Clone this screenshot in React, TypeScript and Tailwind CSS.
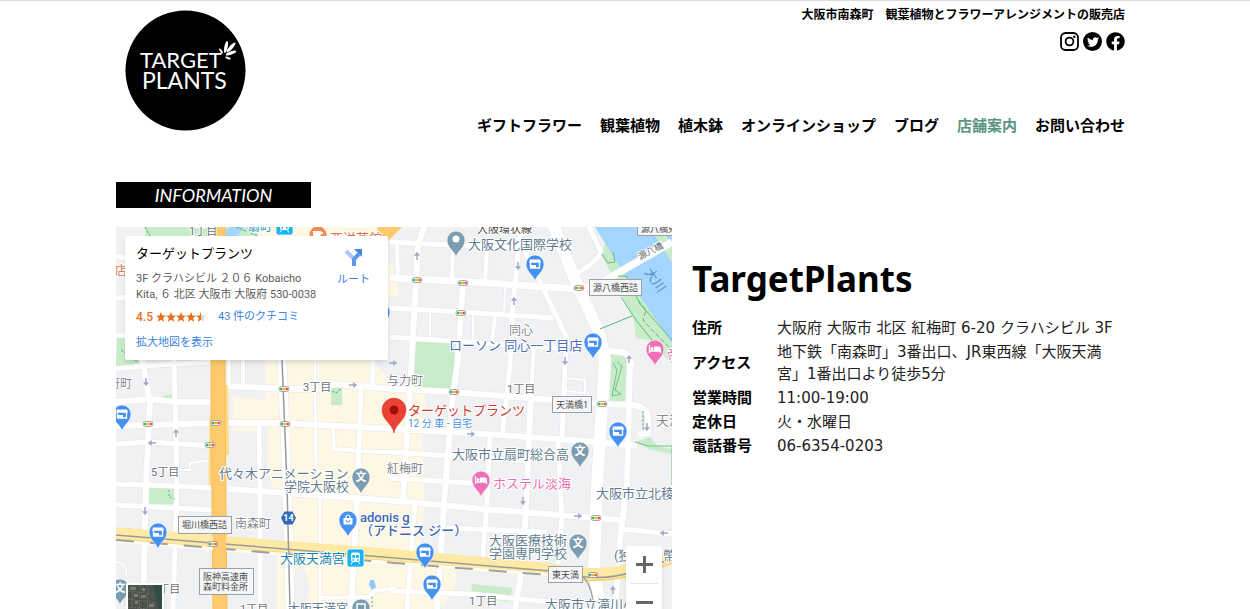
import type { ReactNode } from "react";
import { FaFacebook, FaTwitter } from "react-icons/fa";

type NavItem = { label: string; href: string; active?: boolean };

const NAV_ITEMS: NavItem[] = [
  { label: "ギフトフラワー", href: "#gift" },
  { label: "観葉植物", href: "#plants" },
  { label: "植木鉢", href: "#pots" },
  { label: "オンラインショップ", href: "#shop" },
  { label: "ブログ", href: "#blog" },
  { label: "店舗案内", href: "#information", active: true },
  { label: "お問い合わせ", href: "#contact" },
];

const SHOP_INFO = [
  { term: "住所", detail: "大阪府 大阪市 北区 紅梅町 6-20 クラハシビル 3F" },
  {
    term: "アクセス",
    detail: "地下鉄「南森町」3番出口、JR東西線「大阪天満宮」1番出口より徒歩5分",
  },
  { term: "営業時間", detail: "11:00-19:00" },
  { term: "定休日", detail: "火・水曜日" },
  { term: "電話番号", detail: "06-6354-0203" },
];

// Streets as [path, width]
const STREETS: [string, number][] = [
  ["M116 257H126M116 298L126 297M116 335H126", 5],
  ["M116 369L142 366L175 364L212 362", 5],
  ["M116 402L150 399L175 402L212 402", 6],
  ["M116 426L212 423L282 423L395 429L500 435L597 442L637 446", 6],
  ["M116 444L150 442L212 446", 5],
  ["M116 484L175 486L212 488", 5],
  ["M116 505L175 508L212 510", 5],
  ["M228 386L288 389L322 389L334 384L395 389L453 392L603 404L634 405Q648 408 648 418V433L638 434", 6],
  ["M228 489L315 495L395 501L483 509L597 518L620 520", 6],
  ["M390 452L525 461", 5],
  ["M390 478L484 484", 5],
  ["M447 528L547 532M620 529L672 534", 5],
  ["M320 598L368 597L374 591L395 588", 4],
  ["M390 591L470 594L560 603", 5],
  ["M390 242L450 245L523 249", 5],
  ["M390 308L463 312L553 318", 5],
  ["M390 337L453 341L510 345L567 349", 5],
  ["M597 350L622 352Q631 354 631 366", 6],
  ["M142 358L150 403L146 484L143 609", 6],
  ["M174 358L177 484L173 609", 5],
  ["M243 358V386M229 358V386", 4],
  ["M259 424L260 484V609", 5],
  ["M282 358L287 484L290 609", 9],
  ["M315 358V395L316 467", 3],
  ["M373 358V386M361 388L358 472", 5],
  ["M333 427L334 449L360 451L407 453", 4],
  ["M320 498V609", 3],
  ["M357 498L351 609", 6],
  ["M425 225L418 245L413 335L410 390L403 500", 6],
  ["M415 504L407 609", 5],
  ["M463 282L458 360L452 403L445 490L437 609", 6],
  ["M453 245L452 282M487 248L485 282M397 244L398 279", 4],
  ["M505 288L504 316M430 311V339M473 314V341", 2],
  ["M495 316L492 341M534 346L531 395", 4],
  ["M521 225L512 315L510 365L502 437", 5],
  ["M490 437L487 500L483 557", 5],
  ["M523 248L540 282L567 338L565 365L562 439", 5],
  ["M531 395L527 485L523 564L515 609", 6],
  ["M558 439L560 484L562 517L558 564", 5],
  ["M588 225L600 250Q603 257 578 273", 5],
  ["M630 360L627 485L620 540L615 609", 6],
  ["M553 225L577 284L600 335L605 360L597 485L594 570L601 609", 12],
  ["M457 281L390 278M457 281L577 289L597 285L672 242", 7],
  ["M212 460L190 463V470H180M116 562Q128 564 126 575", 2],
  ["M566 378L585 380V393L566 391V378", 2],
];

type LabelStyle = "area" | "school" | "shop" | "plain" | "sign";

const LABEL_COLORS: Record<LabelStyle, string> = {
  area: "#84898f",
  school: "#5f7d8e",
  shop: "#4a6fb3",
  plain: "#6c7176",
  sign: "#4d4d4d",
};

// [text, x, baseline, size, style]
const LABELS: [string, number, number, number, LabelStyle][] = [
  ["大阪環状線", 477, 233, 11, "sign"],
  ["大阪文化国際学校", 468, 249, 13, "school"],
  ["ローソン 同心一丁目店", 449, 350, 13, "shop"],
  ["同心", 509, 335, 12, "area"],
  ["与力町", 387, 385, 12, "area"],
  ["1丁目", 507, 393, 11, "plain"],
  ["天満", 656, 425, 13, "area"],
  ["大阪市立扇町総合高", 452, 459, 13, "school"],
  ["紅梅町", 387, 473, 12, "area"],
  ["大阪市立北稜", 596, 498, 13, "school"],
  ["大阪医療技術", 489, 545, 13, "school"],
  ["学園専門学校", 489, 558, 13, "school"],
  ["(独", 614, 560, 13, "school"],
  ["幣", 663, 560, 13, "school"],
  ["大阪市立滝川小", 545, 609, 13, "school"],
  ["1丁目", 469, 605, 11, "plain"],
  ["南森町", 235, 528, 12, "area"],
  ["1丁目", 152, 593, 11, "plain"],
  ["1丁目", 240, 613, 11, "plain"],
  ["大阪天満宮", 288, 613, 12, "school"],
  ["代々木アニメーション", 219, 478, 13, "school"],
  ["学院大阪校", 284, 491, 13, "school"],
  ["5丁目", 151, 476, 11, "plain"],
  ["3丁目", 303, 391, 11, "plain"],
  ["府町", 108, 388, 12, "area"],
  ["1丁目", 189, 235, 11, "plain"],
];

// [lines, x, y, width, height]
const SIGNS: [string[], number, number, number, number][] = [
  [["源八橋西詰"], 589, 279, 53, 17],
  [["源八橋東詰"], 637, 220, 53, 16],
  [["天満橋1"], 552, 396, 40, 17],
  [["東天満"], 548, 566, 35, 17],
  [["堀川橋西詰"], 178, 516, 54, 18],
  [["阪神高速南", "森町料金所"], 199, 568, 55, 27],
];

const TRAFFIC_LIGHTS: [number, number][] = [
  [417, 280], [463, 283], [461, 313], [579, 288], [454, 392], [602, 404], [284, 389],
  [285, 424], [216, 423], [210, 445], [148, 424], [213, 544], [596, 518], [593, 575],
];

// [x, y, degrees clockwise from up]
const ONE_WAYS: [number, number, number][] = [
  [417, 256, 0], [518, 266, 180], [514, 301, 0], [565, 361, 180], [353, 385, 90],
  [471, 434, 90], [647, 427, 180], [146, 382, 180], [176, 433, 0], [152, 443, 270],
  [145, 511, 180], [523, 501, 180], [578, 516, 90], [664, 533, 270], [613, 590, 0],
  [629, 359, 0], [393, 363, 90],
];

const SHOP_PINS: [number, number][] = [
  [535, 264], [593, 342], [618, 431], [122, 414], [158, 532], [425, 552], [432, 584], [381, 312],
];

const SCHOOL_PINS: [number, number][] = [[361, 477], [580, 451], [578, 543], [120, 588]];

const HOTEL_PINS: [number, number][] = [[655, 349], [481, 480]];

function Pin({ x, y, color, children }: { x: number; y: number; color: string; children?: ReactNode }) {
  return (
    <g transform={`translate(${x} ${y})`}>
      <path
        d="M0 17C-1.5 11-9 8-9 0A9 9 0 1 1 9 0C9 8 1.500 11 0 17Z"
        fill={color}
        stroke="#fff"
        strokeWidth="0.6"
      />
      {children}
    </g>
  );
}

function StationIcon({ x, y }: { x: number; y: number }) {
  return (
    <g transform={`translate(${x} ${y})`}>
      <rect width="17" height="18" rx="2.500" fill="#17b4f4" stroke="#fff" strokeWidth="0.8" />
      <rect x="4" y="3.500" width="9" height="9.500" rx="2" fill="#fff" />
      <path d="M5.300 6H8V9H5.300ZM9 6H11.700V9H9Z" fill="#17b4f4" />
      <circle cx="6.200" cy="11" r="0.900" fill="#17b4f4" />
      <circle cx="10.800" cy="11" r="0.900" fill="#17b4f4" />
      <path d="M5.500 13L4 15.500M11.500 13L13 15.500" stroke="#fff" />
    </g>
  );
}

function MapDrawing() {
  return (
    <svg
      role="img"
      aria-label="ターゲットプランツ周辺の地図"
      viewBox="116 227 556 382"
      preserveAspectRatio="xMinYMin slice"
      className="absolute inset-0 size-full font-['Roboto','Noto_Sans_CJK_JP',sans-serif]"
    >
      <rect x="116" y="227" width="700" height="600" fill="#eff1f3" />

      {/* commercial blocks */}
      <g fill="#fef7e3">
        <path d="M265 360H373L395 389H425V410H423V452L425 503L412 609H268L265 545L279 500L262 465L263 431H233V396L265 400Z" />
        <path d="M388 263L392 264L400 295L388 296Z" />
        <path d="M407 560L457 565L455 590L440 609H405Z" />
        <path d="M255 227H388V240H255Z" />
      </g>
      <path d="M262 425H268V462L272 495L284 499V542H262ZM260 545H277V609H260ZM296 565L306 572L310 590L305 609H292Z" fill="#eff1f3" />

      {/* parks */}
      <g fill="#c8ecc9">
        <path d="M414 342H455L453 390L413 386Z" />
        <path d="M611 354L627 357L625 402H610Z" />
        <path d="M472 584L512 588L510 602L471 597Z" />
        <path d="M331 388H342V405H331Z" />
        <path d="M148 487L176 488V504H148Z" />
        <path d="M145 227H258V238H145ZM117 337H128L141 365L116 367Z" />
        <path d="M162 396L172 394V400H162Z" />
        <path d="M597 227L606 240L602 255L634 320L636 338L650 340L672 364V340L620 262L600 227Z" />
        <path d="M635 442L650 437L658 446L672 449V454L652 450Z" />
      </g>
      <path d="M595 227L622 270L672 343V227Z" fill="#a3d5ff" />
      <path d="M219 237L230 227H244L237 237Z" fill="#a3d5ff" />
      <path d="M650 227H662L672 246V263Z" fill="#c8ecc9" />

      <g fill="none" stroke="#e3e6ea" strokeLinejoin="round">
        {STREETS.map(([d, width]) => (
          <path key={d} d={d} strokeWidth={width + 1} />
        ))}
      </g>
      <g fill="none" stroke="#fff" strokeLinejoin="round">
        {STREETS.map(([d, width]) => (
          <path key={d} d={d} strokeWidth={width} />
        ))}
      </g>

      <g fill="none" stroke="#55b872">
        <path d="M600 329L632 316" />
        <path d="M621 297L636 320L652 340M602 254L608 263L615 262L613 252M618 276L626 276L640 304L672 340" strokeWidth="0.900" />
        <path d="M638 300L646 310L643 320L652 330L672 350" strokeDasharray="5 2" strokeWidth="0.900" />
        <path d="M617 362L622 366L615 390L621 394L612 396L617 370L613 363M635 442L648 446H672V485" strokeWidth="0.800" />
        <path d="M145 227L150 236M236 227L258 236M121 350L138 362M332 391L336 393L341 389M643 411V431" strokeDasharray="3 1" />
        <path d="M372 597V609M169 490V497L175 499" strokeDasharray="2 2" />
      </g>

      {/* expressway */}
      <path d="M226 385L227 455" stroke="#fddc86" strokeWidth="4" />
      <path d="M211 415L210 485" stroke="#fddc86" strokeWidth="3" />
      <path d="M218 227L218 400L220 609" fill="none" stroke="#f8be58" strokeWidth="15" />
      <path d="M218 227L218 400L220 609" fill="none" stroke="#fdca6e" strokeWidth="13" />
      <path d="M377 227H402L390 239L380 250Z" fill="#fdca6e" />

      {/* national road with the railway running under it */}
      <g fill="none">
        <path d="M116 534L212 542L395 556L550 570Q610 584 672 557" stroke="#f7d774" strokeWidth="13" />
        <path d="M116 533L212 541L395 555L550 569Q610 583 672 556" stroke="#feeaa5" strokeWidth="11" />
        <path d="M116 541L395 563L550 575" stroke="#fffdf2" strokeWidth="3" />
        <path d="M116 535L212 543L395 558L550 571Q600 584 635 571L672 559" stroke="#9b9b9b" strokeWidth="1.500" />
        <path d="M116 540L395 563L550 575" stroke="#a0a0a0" strokeWidth="2" strokeDasharray="18 16" />
        <path d="M582 576Q592 584 594 609" stroke="#a3a3a3" strokeWidth="1.500" />
        <path d="M282 360L287 484L290 609" stroke="#999" strokeWidth="1.500" />
      </g>
      <path d="M213 534H226V554H213Z" fill="#fdca6e" />
      <path d="M370 580H374L376 587L372 590L369 585Z" fill="#8dccf8" />

      {ONE_WAYS.map(([x, y, angle]) => (
        <path
          key={`${x}-${y}`}
          d="M0 4V-2M-1.500 -1L0 -3L1.500 -1Z"
          transform={`translate(${x} ${y}) rotate(${angle})`}
          fill="#a3a8c6"
          stroke="#a3a8c6"
          strokeWidth="1.500"
        />
      ))}

      {TRAFFIC_LIGHTS.map(([x, y]) => (
        <g key={`${x}-${y}`} transform={`translate(${x} ${y})`}>
          <rect x="-5" y="-2.500" width="10" height="5" rx="2.500" fill="#fff" stroke="#8b9095" strokeWidth="0.800" />
          <path d="M-3.800 -1.200H-1.600V1.200H-3.800Z" fill="#35a853" />
          <path d="M-1.100 -1.200H1.100V1.200H-1.100Z" fill="#f4b400" />
          <path d="M1.600 -1.200H3.800V1.200H1.600Z" fill="#ea4335" />
        </g>
      ))}

      {SIGNS.map(([lines, x, y, width, height]) => (
        <g key={lines[0]}>
          <rect x={x + 0.5} y={y + 0.5} width={width - 1} height={height - 1} fill="#f5f6f7" stroke="#9da1a5" />
          {lines.map((line, index) => (
            <text key={line} x={x + 4} y={y + 12 + index * 10} fontSize="9" fill="#4d4d4d">
              {line}
            </text>
          ))}
        </g>
      ))}

      <g stroke="#fff" strokeWidth="2" strokeLinejoin="round" paintOrder="stroke">
        {LABELS.map(([text, x, y, size, style]) => (
          <text key={`${text}-${x}`} x={x} y={y} fontSize={size} fill={LABEL_COLORS[style]}>
            {text}
          </text>
        ))}
        <text x="640" y="260" fontSize="9" fill="#5c6166" transform="rotate(-27 640 260)">
          源八橋
        </text>
        <text x="103" y="275" fontSize="12" fill="#d4744a">東店</text>
        <text x="248" y="231" fontSize="12" fill="#1a93bd">扇町</text>
        <text x="330" y="243" fontSize="13" fill="#d4744a">西洋茶館</text>
        <text x="280" y="563" fontSize="13" fill="#1585ad">大阪天満宮</text>
        <text x="360" y="522" fontSize="13" fontWeight="500" fill="#3c66b0">adonis g</text>
        <text x="360" y="535" fontSize="13" fontWeight="500" fill="#3c66b0">（アドニス ジー）</text>
        <text x="493" y="488" fontSize="13" fill="#ec6db2">ホステル淡海</text>
        <text x="667" y="359" fontSize="13" fill="#ec6db2">帝</text>
        <text x="408" y="415" fontSize="13" fill="#c9382d">ターゲットプランツ</text>
        <text x="408" y="427" fontSize="10" fill="#4b93e8">12 分 車 - 自宅</text>
      </g>
      <text x="644" y="272" fontSize="13" fill="#5a8fc4" transform="rotate(55 644 272)">
        大川
      </text>

      {SHOP_PINS.map(([x, y]) => (
        <Pin key={`${x}-${y}`} x={x} y={y} color="#4491f0">
          <path d="M-5 -4.500H5L6 -1.200H-6Z" fill="#fff" />
          <path d="M-4.500 -1.500V4H4.500V-1.500" fill="none" stroke="#fff" strokeWidth="1.300" />
          <path d="M-4 1H1V4H-4Z" fill="#fff" />
        </Pin>
      ))}
      <Pin x={348} y={520} color="#4491f0">
        <path d="M-4.500 -2H4.500V4.500H-4.500Z" fill="#fff" />
        <path d="M-2 -2V-3A2 2 0 0 1 2 -3V-2" fill="none" stroke="#fff" strokeWidth="1.200" />
        <path d="M-2 0A2 2 0 0 0 2 0" fill="none" stroke="#4491f0" />
      </Pin>
      <Pin x={456} y={240} color="#7c9caf">
        <circle cy="-1" r="3.500" fill="#fff" />
      </Pin>
      {SCHOOL_PINS.map(([x, y]) => (
        <Pin key={`${x}-${y}`} x={x} y={y} color="#7c9caf">
          <text y="4" fontSize="11" fontWeight="700" textAnchor="middle" fill="#fff">
            文
          </text>
        </Pin>
      ))}
      <Pin x={361} y={608} color="#7c9caf">
        <path d="M-4 -4H4V3H-4Z" fill="none" stroke="#fff" strokeWidth="1.500" />
      </Pin>
      {HOTEL_PINS.map(([x, y]) => (
        <Pin key={`${x}-${y}`} x={x} y={y} color="#ee70b8">
          <path d="M-5.500 -4V4M-5.500 2H5.500V4" fill="none" stroke="#fff" strokeWidth="1.300" />
          <path d="M-1 -2.500H4Q6 -2.500 6 0V2H-1Z" fill="#fff" />
          <circle cx="-3" cy="-0.500" r="1.500" fill="#fff" />
        </Pin>
      ))}
      <circle cx="318" cy="235" r="9" fill="#f58b52" stroke="#fff" strokeWidth="0.600" />
      <path d="M313 231H321V235Q317 240 313 235ZM321 232H323V234H321" fill="#fff" />

      <StationIcon x={276} y={217} />
      <StationIcon x={347} y={549} />
      <path d="M284.500 511.500H292.500L296 518L292.500 524.500H284.500L281 518Z" fill="#3069b4" />
      <text x="288.500" y="521" fontSize="9" fontWeight="700" textAnchor="middle" fill="#fff">
        14
      </text>

      <path
        d="M394 433C392 423 382 420 382 410A12 12 0 1 1 406 410C406 420 396 423 394 433Z"
        fill="#ea4335"
        stroke="#d23a2e"
        strokeWidth="0.500"
      />
      <circle cx="394" cy="410" r="4.500" fill="#a50e0e" />
    </svg>
  );
}

function StarRating() {
  const star = "M5 0L6.400 3.500L10 3.800L7.200 6.100L8.100 9.700L5 7.700L1.900 9.700L2.800 6.100L0 3.800L3.600 3.500Z";

  return (
    <svg width="51" height="10" viewBox="0 0 51 10" role="img" aria-label="5 つ星のうち 4.5">
      {[0, 1, 2, 3].map((index) => (
        <path key={index} d={star} transform={`translate(${index * 10} 0)`} fill="#e7711b" />
      ))}
      <path d={star} transform="translate(40 0)" fill="#d5d5d5" />
      <path d="M5 0L3.600 3.500L0 3.800L2.800 6.100L1.900 9.700L5 7.700Z" transform="translate(40 0)" fill="#e7711b" />
    </svg>
  );
}

function PlaceCard() {
  return (
    <div className="absolute top-[9px] left-[9px] flex h-[124px] w-[263px] max-w-full justify-between rounded-xs bg-white pt-2 pr-[18px] pl-[11px] font-['Roboto','Noto_Sans_CJK_JP',sans-serif] text-[11px] leading-4 text-[#5b5b5b] shadow-md">
      <div>
        <p className="text-[13px] leading-5 text-black">ターゲットプランツ</p>
        <p className="mt-[7px]">
          3F クラハシビル ２０６ Kobaicho
          <br />
          Kita, ６ 北区 大阪市 大阪府 530-0038
        </p>
        <p className="mt-[6px] flex items-center">
          <span className="text-xs font-medium text-[#e7711b]">4.5</span>
          <span className="ml-[3px]">
            <StarRating />
          </span>
          <a href="#reviews" className="ml-[11px] text-[#3a84df]">
            43 件のクチコミ
          </a>
        </p>
        <a href="#large-map" className="mt-[10px] block text-[#3a84df]">
          拡大地図を表示
        </a>
      </div>
      <a href="#route" className="flex flex-col items-center gap-1 pt-[2px] text-[#3a84df]">
        <svg width="22" height="22" viewBox="0 0 22 22" fill="none" aria-hidden="true">
          <path d="M3 5L10 12" stroke="#a9c8f2" strokeWidth="4" />
          <path d="M11 20V13L16 8" stroke="#5b98e8" strokeWidth="4" />
          <path d="M11 3H19V11Z" fill="#4285e0" />
        </svg>
        ルート
      </a>
    </div>
  );
}

function ShopMap() {
  return (
    <div className="relative overflow-hidden">
      <MapDrawing />
      <PlaceCard />
      <button
        type="button"
        aria-label="航空写真を表示"
        className="absolute -bottom-3 left-[10px] size-[38px] overflow-hidden border-2 border-white bg-[#4b514b] shadow-md"
      >
        <svg viewBox="0 0 34 34" className="size-full" aria-hidden="true">
          <path d="M25 0H34V34L30 20Z" fill="#2e4f48" />
          <path
            d="M0 6L25 9M0 14L28 18M0 22L30 25M5 0L3 34M12 0L11 34M20 0L19 34"
            stroke="#6a7065"
            strokeDasharray="2 1"
          />
          <path d="M2 2H8V5H2ZM13 10H18V13H13Z" fill="#6f8060" />
          <path d="M6 9H10V12H6ZM21 19H26V22H21ZM14 3H17V6H14ZM7 16H10V19H7Z" fill="#7b7d76" />
        </svg>
      </button>
      <div className="absolute right-[10px] -bottom-3 flex w-9 flex-col items-center rounded-xs bg-white shadow-md">
        <button type="button" aria-label="ズームイン" className="flex h-[37px] w-full items-center justify-center">
          <svg width="17" height="17" viewBox="0 0 17 17" aria-hidden="true">
            <path d="M7 0H10V7H17V10H10V17H7V10H0V7H7Z" fill="#666" />
          </svg>
        </button>
        <span className="h-px w-7 bg-[#e6e6e6]" />
        <button type="button" aria-label="ズームアウト" className="flex h-[37px] w-full items-center justify-center">
          <svg width="17" height="17" viewBox="0 0 17 17" aria-hidden="true">
            <path d="M0 7H17V10H0Z" fill="#666" />
          </svg>
        </button>
      </div>
    </div>
  );
}

function Logo() {
  return (
    <a href="#home" aria-label="TARGET PLANTS" className="mt-[5px] block size-[121px] shrink-0">
      <svg viewBox="0 0 121 121" className="size-full font-['Lato',sans-serif]">
        <circle cx="60.500" cy="60.500" r="60" fill="#000" />
        <text x="15" y="58" fontSize="22" fill="#fff">TARGET</text>
        <text x="17" y="79" fontSize="23" fill="#fff">PLANTS</text>
        <g fill="#fff">
          <ellipse cx="96" cy="41" rx="1.100" ry="3" transform="rotate(-35 96 41)" />
          <ellipse cx="101" cy="37" rx="1.700" ry="6" transform="rotate(12 101 37)" />
          <ellipse cx="106" cy="37.500" rx="1.700" ry="6.500" transform="rotate(42 106 37.500)" />
          <ellipse cx="106" cy="43" rx="1.700" ry="5.500" transform="rotate(70 106 43)" />
          <ellipse cx="103" cy="48" rx="1" ry="3" transform="rotate(110 103 48)" />
        </g>
      </svg>
    </a>
  );
}

function InstagramIcon() {
  return (
    <svg width="19" height="19" viewBox="0 0 19 19" fill="none" stroke="#000" aria-hidden="true">
      <rect x="1" y="1" width="17" height="17" rx="4.500" strokeWidth="1.800" />
      <circle cx="9.500" cy="9.500" r="3.900" strokeWidth="1.800" />
      <circle cx="14.300" cy="4.700" r="1.200" fill="#000" stroke="none" />
    </svg>
  );
}

function Header() {
  return (
    <header className="flex justify-between px-[9px] pt-1">
      <Logo />
      <div className="flex flex-col items-end font-bold">
        <p className="text-xs leading-5">大阪市南森町　観葉植物とフラワーアレンジメントの販売店</p>
        <div className="mt-[7px] flex gap-1">
          <a href="#instagram" aria-label="Instagram">
            <InstagramIcon />
          </a>
          <a
            href="#twitter"
            aria-label="Twitter"
            className="flex size-[19px] items-center justify-center rounded-full bg-black text-white"
          >
            <FaTwitter size={12} />
          </a>
          <a href="#facebook" aria-label="Facebook">
            <FaFacebook size={19} />
          </a>
        </div>
        <nav className="mt-[65px]">
          <ul className="flex flex-wrap justify-end gap-x-[18px] text-[15px] leading-5">
            {NAV_ITEMS.map((item) => (
              <li key={item.label}>
                <a href={item.href} className={item.active ? "text-[#5b9384]" : "text-black"}>
                  {item.label}
                </a>
              </li>
            ))}
          </ul>
        </nav>
      </div>
    </header>
  );
}

export default function App() {
  return (
    <div className="h-screen overflow-hidden border-t border-[#dadadf] bg-white font-['DejaVu_Sans','Noto_Sans_CJK_JP',sans-serif] text-black">
      <div className="mx-auto flex h-full max-w-[1018px] flex-col">
        <Header />
        <h2 className="mt-[46px] w-[195px] bg-black text-center font-['Lato',sans-serif] text-[18px] leading-[26px] text-white italic">
          INFORMATION
        </h2>
        <main className="mt-[19px] grid flex-1 grid-cols-[556fr_442fr] gap-5">
          <ShopMap />
          <section className="pt-8 pr-4">
            <h1 className="font-['Noto_Sans',sans-serif] text-[35px] leading-10 font-bold">TargetPlants</h1>
            <table className="mt-[17px] w-full text-left text-[15px] leading-[22px]">
              <tbody>
                {SHOP_INFO.map(({ term, detail }) => (
                  <tr key={term}>
                    <th scope="row" className="w-[85px] py-px font-bold">
                      {term}
                    </th>
                    <td className="py-px text-[#222]">{detail}</td>
                  </tr>
                ))}
              </tbody>
            </table>
          </section>
        </main>
      </div>
    </div>
  );
}
